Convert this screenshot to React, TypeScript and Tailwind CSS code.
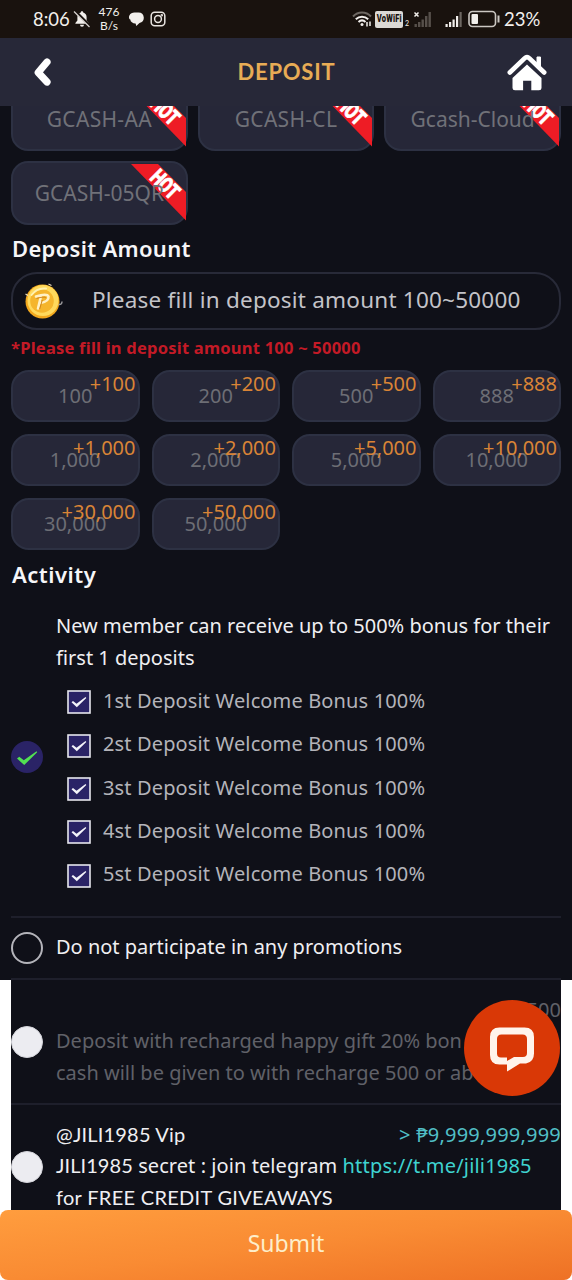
import { ReactNode } from "react";

function StatusBar() {
  return (
    <div className="flex h-[38px] shrink-0 items-center bg-[#19120e] pl-[33px] font-['Lato',sans-serif] text-[#f2efec]">
      <span className="w-[37px] text-[18.5px] leading-none">8:06</span>
      <svg className="ml-[3px] h-[18px] w-[18px]" viewBox="0 0 18 18">
        <path d="M9 1.2c.8 0 1.2.5 1.2 1.2 2.2.6 3.4 2.3 3.4 4.6v3.5l2 2.6v.6H2.4v-.6l2-2.6V7c0-2.3 1.200-4 3.400-4.600 0-.7.400-1.200 1.200-1.200z" fill="#f2efec" />
        <path d="M7 14.700h4a2 2 0 0 1-4 0z" fill="#f2efec" />
        <path d="M2 .8 17.500 16.300" stroke="#19120e" strokeWidth="2.600" />
        <path d="M1 1.500 16.500 17" stroke="#d8d4d0" strokeWidth="1.200" />
      </svg>
      <span className="ml-[5px] flex w-[26px] flex-col items-center text-[12px] leading-[14px]">
        <span>476</span>
        <span>B/s</span>
      </span>
      <svg className="ml-[6px] h-[16px] w-[16px]" viewBox="0 0 16 16" fill="#f2efec">
        <path d="M6.500 1.500h4A5.300 5.300 0 0 1 11.500 12l-3.200 3-.7-2.600C4.800 12.500 2.500 11 2.300 8.500.800 7.800.6 5.700 1.500 4.300 2.500 2.500 4.200 1.500 6.500 1.500z" />
      </svg>
      <svg className="ml-[5.500px] h-[16px] w-[16px]" viewBox="0 0 16 16" fill="none" stroke="#e8e4e0" strokeWidth="1.500">
        <rect x="1.200" y="1.200" width="13.600" height="13.600" rx="3.500" />
        <circle cx="8" cy="8" r="3.400" />
        <circle cx="11.800" cy="4.200" r=".5" />
      </svg>
      <svg className="ml-auto h-[18px] w-[20px]" viewBox="0 0 20 18" fill="none" strokeWidth="2">
        <path d="M1 6.500C6 1.200 14 1.200 19 6.500" stroke="#6d6762" />
        <path d="M3.800 9.200c3.600-3.400 8.800-3.400 12.400 0" stroke="#f2efec" />
        <path d="M6.500 12c2.100-1.900 4.900-1.900 7 0" stroke="#f2efec" />
        <circle cx="10" cy="14.600" r="1.500" fill="#f2efec" />
        <path d="M15 12v4.500M18 11.500V16" stroke="#f2efec" strokeWidth="1.500" />
      </svg>
      <span className="ml-[3px] flex h-[17px] w-[28px] items-center justify-center rounded-[2px] bg-[#dcd9d5] font-['Roboto',sans-serif] text-[10.5px] font-black leading-none text-[#19120e]">
        <span className="scale-x-[0.72] tracking-[0.2px]">VoWiFi</span>
      </span>
      <span className="ml-[2px] mt-[9px] text-[7px] leading-none">2</span>
      <svg className="ml-[4px] h-[18px] w-[20px]" viewBox="0 0 20 18">
        <path d="M1.500 2.500l4 4M5.500 2.500l-4 4" stroke="#f2efec" strokeWidth="1.500" />
        <g fill="#57504b">
          <rect x="1.500" y="14" width="2.400" height="3" />
          <rect x="5" y="12" width="2.400" height="5" />
          <rect x="8.500" y="9.500" width="2.400" height="7.500" />
          <rect x="12" y="6" width="2.400" height="11" />
          <rect x="15.500" y="2" width="2.400" height="15" />
        </g>
      </svg>
      <svg className="ml-[11px] h-[18px] w-[20px]" viewBox="0 0 20 18" fill="#f2efec">
        <rect x="1.500" y="14" width="2.200" height="3" />
        <rect x="5" y="12" width="2.200" height="5" />
        <rect x="8.500" y="9.500" width="2.200" height="7.500" />
        <rect x="12" y="6" width="2.200" height="11" />
        <rect x="15.500" y="2" width="2.200" height="15" fill="#6d6762" />
      </svg>
      <svg className="ml-[4px] h-[18px] w-[33px]" viewBox="0 0 33 18">
        <rect x="1" y="1.500" width="26.500" height="15" rx="3.500" fill="none" stroke="#cbc7c3" strokeWidth="1.600" />
        <rect x="3.500" y="4" width="6.500" height="10" rx="1" fill="#f2efec" />
        <path d="M30.500 5.500v7" stroke="#cbc7c3" strokeWidth="2" />
      </svg>
      <span className="ml-[3px] w-[68px] text-[18.5px] leading-none">23%</span>
    </div>
  );
}

function Header() {
  return (
    <header className="flex h-[68px] shrink-0 items-center justify-between bg-[#272838] pl-[27px] pr-[24px]">
      <svg className="h-[30px] w-[40px]" viewBox="-6 0 40 30">
        <path d="M14 5 5.200 15.500l8.800 9.500" fill="none" stroke="#fff" strokeWidth="7.200" strokeLinecap="round" strokeLinejoin="round" />
      </svg>
      <h1 className="pb-[2px] font-['Lato',sans-serif] text-[22px] font-bold tracking-[0.77px] text-[#e8ac55]">DEPOSIT</h1>
      <svg className="h-[40px] w-[42px]" viewBox="0 0 42 40">
        <path d="M31 5h3.500v10L31 12z" fill="#fff" stroke="#fff" strokeLinejoin="round" />
        <path d="M3.800 20.500 18.500 6.300q2.500-2.400 5 0l14.700 14.200" fill="none" stroke="#fff" strokeWidth="4.600" strokeLinecap="round" strokeLinejoin="round" />
        <path d="M21 12.500 35.500 26v10q0 2.300-2.500 2.300h-7.700V28.700h-8.200v9.600H9q-2.500 0-2.500-2.300V26z" fill="#fff" />
      </svg>
    </header>
  );
}

function Hot() {
  return (
    <svg className="absolute -right-[2px] top-[1px] h-[58px] w-[58px]" viewBox="0 0 58 58">
      <path d="M1 0h27l28 28v28.500z" fill="#ee1c25" />
      <text
        transform="translate(35 20.500) rotate(45) scale(.72 1)"
        textAnchor="middle"
        dominantBaseline="central"
        className="fill-white stroke-white stroke-[0.8px] font-['Roboto',sans-serif] text-[22px] font-black"
      >
        HOT
      </text>
    </svg>
  );
}

function Channel({ children, track }: { children: string; track: string }) {
  return (
    <div className="relative flex h-[64px] items-center justify-center rounded-[17px] border-2 border-[#2d3143] bg-[#262738]">
      <Hot />
      <span className={`relative whitespace-nowrap text-[21px] leading-none text-[#707178] ${track}`}>{children}</span>
    </div>
  );
}

function Coin() {
  return (
    <svg className="h-[38px] w-[40px]" viewBox="0 0 40 38">
      <circle cx="18.500" cy="19.500" r="17" fill="#f3a81d" />
      <circle cx="19" cy="18.500" r="15.500" fill="#ffd95c" />
      <circle cx="18" cy="19" r="11.800" fill="#f5b52c" />
      <path d="M7.500 13Q13 5.500 22 6.500" stroke="#fff2b0" strokeWidth="2" fill="none" strokeLinecap="round" />
      <path d="M14 26.500l3-12.500M12 14.500q11-3.500 12.500 0 .5 5-8 6.500" stroke="#fff0c4" strokeWidth="2.600" fill="none" strokeLinecap="round" />
      <path d="M15.700 27l2.600-9M12.500 16.500q8-2.500 9.500-.5" stroke="#d0851b" strokeWidth="1" fill="none" />
      <path d="M34.500 22.500q3.500.5 3.500-3" fill="none" stroke="#9b9a9c" strokeWidth="1.500" />
      <path d="M1.500 12l2.500 1.500M24.500 2l3 1.500" stroke="#e8dcc0" strokeWidth="1.200" />
    </svg>
  );
}

const amounts = ["100", "200", "500", "888", "1,000", "2,000", "5,000", "10,000", "30,000", "50,000"];
const bonuses = ["1st", "2st", "3st", "4st", "5st"];

function Row({ mark, children, className }: { mark: ReactNode; children: ReactNode; className: string }) {
  return (
    <div className={`flex items-center border-b-2 border-[#1e1f2b] ${className}`}>
      <div className="w-[45px] shrink-0">{mark}</div>
      <div className="min-w-0 flex-1 whitespace-nowrap text-[20px] leading-[31.5px]">{children}</div>
    </div>
  );
}

const Knob = () => <div className="h-[32px] w-[32px] rounded-full border border-[#d4d4da] bg-[#ececf1]" />;

export default function App() {
  return (
    <div className="relative flex h-[1280px] w-[572px] flex-col overflow-hidden bg-white font-['Noto_Sans','Lato',sans-serif]">
      <StatusBar />
      <Header />
      <main className="h-[874px] shrink-0 overflow-hidden bg-[#0f1018] px-[11px]">
        <div className="-mt-[19px] grid grid-cols-3 gap-[10px]">
          <Channel track="tracking-[0.3px]">GCASH-AA</Channel>
          <Channel track="tracking-[0.3px]">GCASH-CL</Channel>
          <Channel track="tracking-normal">Gcash-Cloud</Channel>
          <Channel track="tracking-normal">GCASH-05QR</Channel>
        </div>
        <h2 className="flex h-[47px] items-center pl-px text-[22px] font-semibold tracking-[0.3px] text-[#f6f6f8]">Deposit Amount</h2>
        <div className="flex h-[58px] items-center rounded-[26px] border-2 border-[#282a38] pl-[11px]">
          <Coin />
          <span className="ml-[28px] whitespace-nowrap pb-[2px] text-[22.5px] tracking-[0.22px] text-[#c3c3c8]">Please fill in deposit amount 100~50000</span>
        </div>
        <p className="flex h-[40px] items-center whitespace-nowrap pb-[4px] text-[16.5px] font-bold tracking-[0.23px] text-[#c31a26]">
          *Please fill in deposit amount 100 ~ 50000
        </p>
        <div className="grid grid-cols-4 gap-3">
          {amounts.map((a) => (
            <div key={a} className="relative flex h-[52px] items-center justify-center rounded-[18px] border-2 border-[#2d3143] bg-[#262738] pb-px text-[20px] leading-none">
              <span className="text-[#6d6e75]">{a}</span>
              <span className="absolute right-[2px] top-[1.5px] text-[#d98436]">+{a}</span>
            </div>
          ))}
        </div>
        <h2 className="flex h-[48px] items-center pl-px text-[22px] font-semibold tracking-[0.5px] text-[#f6f6f8]">Activity</h2>
        <Row
          className="h-[320px]"
          mark={
            <svg className="h-[32px] w-[32px]" viewBox="0 0 32 32">
              <circle cx="16" cy="16" r="16" fill="#2a2366" />
              <path d="M6 17.500 8.300 15.800 12.800 19.200 25.500 10.200 26.200 11.200 13.200 24z" fill="#52e052" />
            </svg>
          }
        >
          <div className="text-[#efeff2]">
            <p className="leading-[32px]">New member can receive up to 500% bonus for their</p>
            <p className="leading-[32px]">first 1 deposits</p>
          </div>
          <ul className="mb-[8px] mt-[5px] pl-[11px]">
            {bonuses.map((b) => (
              <li key={b} className="flex h-[43.3px] items-center">
                <svg className="mt-[3px] h-[24px] w-[24px]" viewBox="0 0 24 24">
                  <rect x="1" y="1" width="22" height="22" fill="#2a2366" stroke="#e6e6ee" strokeWidth="1.600" />
                  <path d="M4.500 12.200 6 11 9.500 13.700 18.500 7 19.300 8 9.800 17.300z" fill="#f4f4fa" />
                </svg>
                <span className="ml-[12px] tracking-[0.14px] text-[#b4b4ba]">{b} Deposit Welcome Bonus 100%</span>
              </li>
            ))}
          </ul>
        </Row>
        <Row className="h-[62px]" mark={<div className="h-[32px] w-[32px] rounded-full border-2 border-[#b4b4ba]" />}>
          <p className="pb-[3px] text-[#efeff2]">Do not participate in any promotions</p>
        </Row>
      </main>
      <section className="mx-[11px] h-[230px] shrink-0 overflow-hidden bg-[#0f1018]">
        <Row className="h-[125px]" mark={<Knob />}>
          <div className="pb-px text-[#606168]">
            <p className="text-right">&gt; ₱500</p>
            <p>Deposit with recharged happy gift 20% bon</p>
            <p>cash will be given to with recharge 500 or abo</p>
          </div>
        </Row>
        <Row className="h-[125px]" mark={<Knob />}>
          <div className="pb-px text-[#efeff2]">
            <p className="flex justify-between">
              <span className="font-['Lato',sans-serif] tracking-[0.18px]">@JILI1985 Vip</span>
              <span className="tracking-[0.21px] text-[#51bfc6]">&gt; ₱9,999,999,999</span>
            </p>
            <p className="tracking-[0.07px]">
              <span className="font-['Lato',sans-serif]">JILI1985</span> secret : join telegram{" "}
              <a className="tracking-[0.18px] text-[#3fd3d0]">https://t.me/jili1985</a>
            </p>
            <p className="font-['Lato',sans-serif] tracking-[0.3px]">for FREE CREDIT GIVEAWAYS</p>
          </div>
        </Row>
      </section>
      <button className="h-[70px] w-full shrink-0 rounded-[8px] bg-linear-to-br from-[#ff9d3e] via-[#f98b33] to-[#ee7125] pb-[3px] text-[23px] text-[#fdeecb]">
        Submit
      </button>
      <div className="absolute left-[464px] top-[1000px] flex h-[96px] w-[96px] items-center justify-center rounded-full bg-[#d93806]">
        <svg className="mt-[2px] h-[46px] w-[46px]" viewBox="0 0 46 46">
          <path
            fillRule="evenodd"
            fill="#fff4ec"
            d="M10.500 1.500h25q9.500 0 9.500 9.500v16.500q0 8.500-8 10h-6L18 45.500V38.500h-7.500Q1 38.500 1 29V11q0-9.500 9.500-9.500zM12.500 8.500q-4.500 0-4.500 4.500v14.500q0 4 4 4h6V35l7-4h9q4 0 4-4V13q0-4.500-4.500-4.500z"
          />
        </svg>
      </div>
    </div>
  );
}
